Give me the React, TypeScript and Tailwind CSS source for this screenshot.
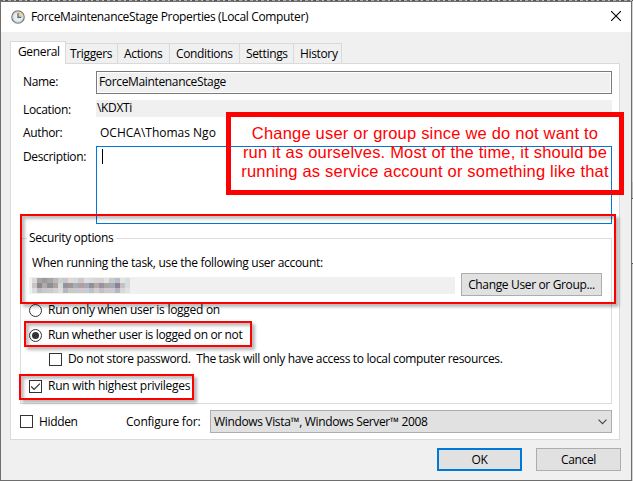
import type { ReactNode } from "react";

function Clock() {
  return (
    <svg width="14" height="14" viewBox="0 0 14 14" className="shrink-0">
      <circle cx="7" cy="7" r="6.2" fill="#e4edf3" stroke="#777b7e" strokeWidth="1.3" />
      <circle cx="7" cy="7" r="5" fill="none" stroke="#c3ccd2" strokeWidth="0.8" />
      <path d="M7 7V2.3A4.7 4.7 0 0 1 11.7 7Z" fill="#f3cf8c" />
      <path d="M7 3v4.4h3.2" fill="none" stroke="#4d6880" strokeWidth="1.2" />
    </svg>
  );
}

function Tab({ children, className }: { children: ReactNode; className: string }) {
  return (
    <div className={`h-[20px] border border-b-0 border-l-0 border-[#dadada] pt-[2px] leading-4 ${className}`}>
      {children}
    </div>
  );
}

function Check({ checked }: { checked?: boolean }) {
  return (
    <span className="flex h-[13px] w-[13px] shrink-0 items-center justify-center border border-[#333] bg-white">
      {checked && (
        <svg width="11" height="11" viewBox="0 0 11 11">
          <path d="M1.2 5.5 4.1 8.4 9.9 2.6" fill="none" stroke="#333" strokeWidth="1.2" />
        </svg>
      )}
    </span>
  );
}

function Radio({ checked }: { checked?: boolean }) {
  return (
    <span className="flex h-[13px] w-[13px] shrink-0 items-center justify-center rounded-full border border-[#333] bg-white">
      {checked && <span className="h-[7px] w-[7px] rounded-full bg-[#333]" />}
    </span>
  );
}

const mosaic = [
  ["#d9d9dc", "#a9a5a5", "#9c9aa0", "#aaa5a0", "#bbb9b8", "#c9d0ce", "#c8c8c8", "#ded9d5", "#d5d8da", "#c9cace", "#e0dedb", "#dadada", "#d3d7d9", "#d7d3cf", "#e1e1e3", "#cbc8ca", "#b9bdc6", "#e2e3e3", "#d8dce3"],
  ["#c8c4c2", "#8c8890", "#b1aba6", "#8f9094", "#aca3a0", "#d5dada", "#9593a1", "#a29694", "#a5adb5", "#b0a0a0", "#aaa7b8", "#8b929c", "#bba8a4", "#9494a5", "#b1a39f", "#a5abb5", "#87849b", "#c9bfba", "#d7dce4"],
  ["#dddde0", "#c3bfc0", "#c5c8cd", "#cfcac6", "#d2d3d6", "#e0dcda", "#b8b5c2", "#cec7c1", "#c5ccd0", "#d1c8c7", "#cac9d5", "#bbc1c7", "#d7ceca", "#c0bfca", "#cfcac7", "#c8ccd2", "#b7b4c3", "#ded7d3", "#e0e2e7"],
];

const shadow = "shadow-[3px_3px_3px_rgba(0,0,0,0.28),inset_3px_3px_3px_rgba(0,0,0,0.25)]";

export default function App() {
  return (
    <div className="relative h-[481px] w-[633px] overflow-hidden bg-[#d4d4d4] pt-px font-['Open_Sans','Noto_Sans',sans-serif] text-[12px] tracking-[-0.35px] text-black">
      <div className="absolute left-0 top-0 flex h-px w-full bg-[repeating-linear-gradient(90deg,#666_0_3px,#bbb_3px_5px,#555_5px_8px,#aaa_8px_11px)]" />
      <div className="absolute right-0 top-[182px] h-[16px] w-px bg-[#c0c0c0]" />
      <div className="absolute right-0 top-[198px] h-[66px] w-px border-y border-[#555] bg-[#eee]" />

      <div className="relative flex h-[480px] w-[632px] flex-col border border-[#6e6e6e] bg-[#f0f0f0]">
        <header className="flex h-[30px] shrink-0 items-center bg-white pl-[10px] pr-[10px]">
          <Clock />
          <span className="ml-[6px] whitespace-nowrap leading-4">ForceMaintenanceStage Properties (Local Computer)</span>
          <svg width="10" height="10" viewBox="0 0 10 10" className="mb-[2px] ml-auto">
            <path d="M0 0 10 10M10 0 0 10" stroke="#000" strokeWidth="1.1" />
          </svg>
        </header>

        <nav className="relative flex h-[31px] shrink-0 items-end pl-[9px]">
          <div className="relative z-10 -mb-px h-[23px] w-[56px] border border-b-0 border-[#dadada] bg-white pl-[7px] pt-[2px] leading-4">General</div>
          <Tab className="w-[52px] pl-[4px]">Triggers</Tab>
          <Tab className="w-[52px] pl-[6px]">Actions</Tab>
          <Tab className="w-[70px] pl-[6px]">Conditions</Tab>
          <Tab className="w-[54px] pl-[6px]">Settings</Tab>
          <Tab className="w-[48px] pl-[6px]">History</Tab>
        </nav>

        <main className="ml-[9px] h-[377px] w-[610px] shrink-0 border border-[#dadada] bg-white pt-[7px] leading-4">
          <div className="grid grid-cols-[73px_516px] pl-[12px]">
            <label className="pt-[3px]">Name:</label>
            <div className="h-[23px] border border-[#7a7a7a] bg-[#f0f0f0] pl-[2px] pt-[2px] shadow-[inset_0_0_0_1px_#fff]">ForceMaintenanceStage</div>
            <label className="h-[23px] pt-[8px]">Location:</label>
            <div className="mt-[6px] h-[17px] bg-[#f0f0f0] pl-px leading-[15px]">\KDXTi</div>
            <label className="h-[29px] pt-[8px]">Author:</label>
            <div className="pl-[4px] pt-[8px] tracking-[0px]">OCHCA\Thomas Ngo</div>
            <label className="pt-[3px]">Description:</label>
            <div className="h-[78px] border border-[#0078d7] pl-[5px] pt-[2px]">
              <div className="h-[15px] w-px bg-black" />
            </div>
          </div>

          <section className="ml-[9px] mt-[14px] h-[166px] w-[592px] border border-[#dcdcdc]">
            <h2 className="-mt-[9px] ml-[6px] w-[89px] bg-white pl-[2px]">Security options</h2>
            <p className="ml-[11px] mt-[9px] tracking-[-0.3px]">When running the task, use the following user account:</p>
            <div className="ml-[8px] mt-[2px] flex">
              <div className="mt-[4px] h-[17px] w-[426px] bg-[#f0f0f0] pl-[3px] pt-px">
                <div className="grid w-[98px] grid-cols-19">
                  {mosaic.flat().map((color, i) => (
                    <span key={i} className="h-[5px]" style={{ backgroundColor: color }} />
                  ))}
                </div>
              </div>
              <button className="ml-[6px] h-[23px] w-[141px] border border-[#adadad] bg-[#e1e1e1] leading-4">Change User or Group...</button>
            </div>
            <div className="ml-[8px] mt-[6px] flex items-center gap-[6px] tracking-[-0.28px]"><Radio />Run only when user is logged on</div>
            <div className="ml-[8px] mt-[9px] flex items-center gap-[6px]"><Radio checked />Run whether user is logged on or not</div>
            <div className="ml-[28px] mt-[8px] flex items-center gap-[6px] whitespace-pre"><Check />Do not store password.  The task will only have access to local computer resources.</div>
            <div className="ml-[8px] mt-[11px] flex items-center gap-[6px] tracking-[-0.27px]"><Check checked />Run with highest privileges</div>
          </section>

          <div className="ml-[9px] mt-[6px] flex h-[23px] items-center">
            <Check />
            <span className="ml-[6px] w-[87px]">Hidden</span>
            <span className="w-[84px] tracking-[-0.2px]">Configure for:</span>
            <div className="flex h-[23px] w-[402px] items-center justify-between border border-[#adadad] bg-[#e1e1e1] pl-[3px] pr-[4px]">
              Windows Vista™, Windows Server™ 2008
              <svg width="9" height="6" viewBox="0 0 9 6">
                <path d="M.5.7 4.5 4.7 8.5.7" fill="none" stroke="#444" strokeWidth="1.1" />
              </svg>
            </div>
          </div>
        </main>

        <footer className="mt-[8px] flex justify-end gap-[14px] pr-[10px]">
          <button className="h-[23px] w-[85px] border-2 border-[#0078d7] bg-[#e1e1e1] leading-4">OK</button>
          <button className="h-[23px] w-[85px] border border-[#adadad] bg-[#e1e1e1] leading-4">Cancel</button>
        </footer>
      </div>

      <div className={`absolute left-[20px] top-[214px] h-[90px] w-[596px] border-2 border-[#f00] ${shadow}`} />
      <div className={`absolute left-[24px] top-[321px] h-[26px] w-[228px] border-2 border-[#f00] ${shadow}`} />
      <div className={`absolute left-[19px] top-[374px] h-[26px] w-[175px] border-2 border-[#f00] ${shadow}`} />
      <div className="absolute left-[226px] top-[112px] h-[83px] w-[398px] whitespace-nowrap border-5 border-[#f00] pt-[7px] text-center font-['Liberation_Sans',Arial,sans-serif] text-[16.5px] leading-[19px] tracking-[0.2px] text-[#f00]">
        <div>Change user or group since we do not want to</div>
        <div>run it as ourselves. Most of the time, it should be</div>
        <div>running as service account or something like that</div>
      </div>
    </div>
  );
}
